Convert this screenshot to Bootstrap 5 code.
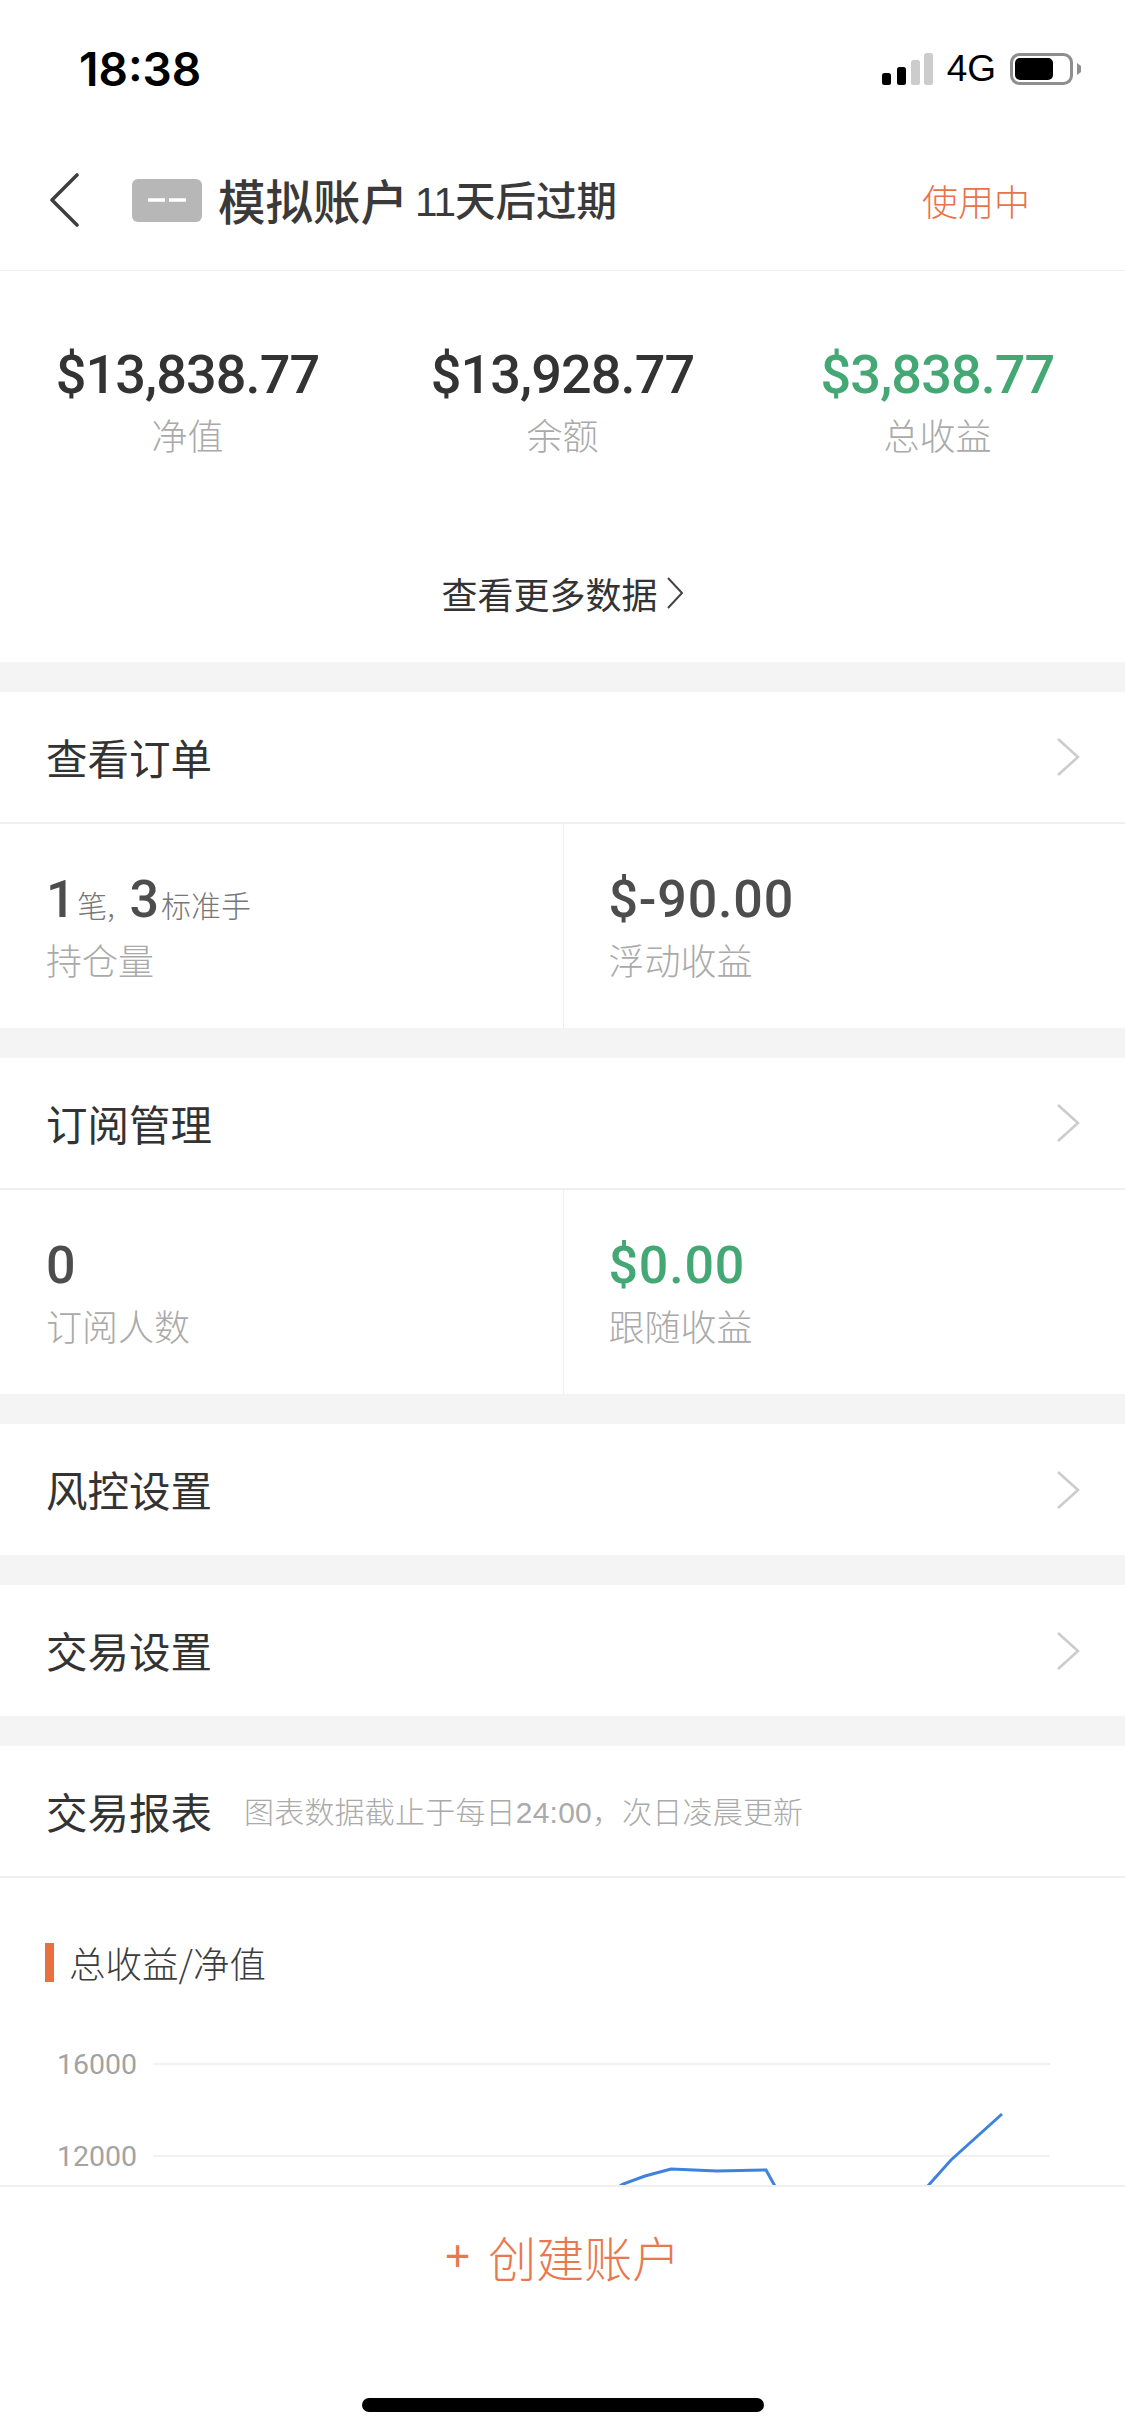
<!DOCTYPE html>
<html lang="zh-CN">
<head>
<meta charset="utf-8">
<title>模拟账户</title>
<link rel="stylesheet" href="https://cdn.jsdelivr.net/npm/bootstrap@5.3.0/dist/css/bootstrap.min.css">
<style>
html,body{height:2436px;overflow:hidden;background:#fff}
body{font-family:"Liberation Sans","Noto Sans CJK SC",sans-serif;color:#333;position:relative;width:1125px}
.cjk{font-family:"Noto Sans CJK SC",sans-serif}
.status-bar{height:130px;padding:47px 43px 0 79px}
.clock{font-family:Inter,"Liberation Sans",sans-serif;font-weight:600;font-size:46px;line-height:44px;color:#000}
.status-icons{margin-top:6px;gap:14px}
.signal-net{font-family:"Liberation Sans",sans-serif;font-size:37px;line-height:32px;color:#000}
.top-nav{height:141px;padding:0 95px 0 49px;border-bottom:1px solid #eee}
.tag-mock{width:70px;height:43px;margin-left:53px;margin-right:16px;background:#b7b7b7;border-radius:6px}
.title-main{font-size:47.5px;font-weight:500;color:#3a3a3a;line-height:60px}
.title-sub{font-size:40.5px;font-weight:500;color:#3a3a3a;line-height:60px;margin-left:7px}
.title-sub b{font-family:"Liberation Sans",sans-serif;font-weight:400;letter-spacing:-1px}
.status-use{font-size:36px;color:#e8734a;font-weight:300;line-height:50px}
.summary{height:391px;padding-top:72px}
.num{font-family:Roboto,"Liberation Sans",sans-serif;font-weight:500}
.sum-val{font-size:54px;line-height:64px;color:#333;letter-spacing:-.9px}
.sum-lab,.cell-lab{font-size:36px;line-height:50px;color:#aaa;font-weight:300}
.sum-lab{margin-top:2px}
.cell-lab{margin-top:3px}
.more-link{margin-top:109px;font-size:36px;line-height:50px;font-weight:400;color:#333;text-decoration:none}
.band{height:30px;background:#f4f4f4}
.row-link{height:132px;padding:0 45px 0 46px;border-bottom:2px solid #efefef;font-size:41.5px;font-weight:400;color:#333;text-decoration:none}
.row-plain{height:131px;border-bottom:0}
.cells{height:204px}
.cell{padding:45px 0 0 46px}
.cell+.cell{padding-left:45px;border-left:1px solid #efefef}
.cell-val{font-size:52px;line-height:62px;color:#4d4d4d;letter-spacing:.8px}
.cell-val small{font-family:"Noto Sans CJK SC",sans-serif;font-size:30px;line-height:1;font-weight:300;color:#777;margin:0 1px;letter-spacing:0}
.txt-up,.cell-val.txt-up{color:#44a875}
.rep-note{margin-left:32px;font-size:30px;font-weight:300;color:#aaa;letter-spacing:.2px}
.rep-note span{font-family:"Liberation Sans",sans-serif}
.chart-title{margin:65px 0 0 45px;border-left:9px solid #e8703f;height:39px;padding-left:15px;font-size:36.5px;line-height:39px;font-weight:300;color:#3c3c3c}
.chart-box{display:block;margin-top:19px}
.axis-txt{font-family:Roboto,"Liberation Sans",sans-serif;font-size:28.5px;fill:#a3a3a3}
.foot-bar{position:absolute;left:0;right:0;top:2185px;bottom:0;background:#fff;border-top:2px solid #efefef}
.foot-btn{height:134px;padding-top:4px;font-size:48px;font-weight:300;color:#e8794f;text-decoration:none}
.foot-btn i{font-style:normal;font-size:44px;margin-right:18px;font-family:"Liberation Sans",sans-serif;line-height:1}
.home-bar{position:absolute;left:362px;top:211px;width:402px;height:14px;background:#000;border-radius:7px}
</style>
</head>
<body>
<div class="cjk">
  <div class="status-bar d-flex justify-content-between align-items-start">
    <div class="clock">18:38</div>
    <div class="status-icons d-flex align-items-center">
      <svg width="51" height="32" viewBox="0 0 51 32" class="d-block" role="img" aria-label="signal">
        <rect x="0" y="20" width="9" height="12" rx="2.5" fill="#000"/>
        <rect x="15" y="14" width="9" height="18" rx="2.5" fill="#000"/>
        <rect x="29" y="7" width="9" height="25" rx="2.5" fill="#ccc"/>
        <rect x="42" y="0" width="9" height="32" rx="2.5" fill="#ccc"/>
      </svg>
      <span class="signal-net">4G</span>
      <svg width="72" height="32" viewBox="0 0 72 32" class="d-block" role="img" aria-label="battery">
        <rect x="1.5" y="1.5" width="60" height="29" rx="8" fill="none" stroke="#8e8e8e" stroke-width="3"/>
        <rect x="5" y="5" width="38" height="22" rx="5" fill="#000"/>
        <path d="M67 10 L71 13 V19 L67 22Z" fill="#8e8e8e"/>
      </svg>
    </div>
  </div>
  <div class="top-nav d-flex align-items-center">
    <svg width="30" height="54" viewBox="0 0 30 54" class="flex-shrink-0" role="img" aria-label="back"><path d="M28 2 L3 27 L28 52" fill="none" stroke="#404040" stroke-width="3.6" stroke-linecap="round" stroke-linejoin="round"/></svg>
    <span class="tag-mock d-flex align-items-center justify-content-center flex-shrink-0">
      <svg width="38" height="6" viewBox="0 0 38 6"><path d="M0 3H17M21 3H38" stroke="#fff" stroke-width="3.4"/></svg>
    </span>
    <span class="title-main">模拟账户</span>
    <span class="title-sub"><b>11</b>天后过期</span>
    <span class="status-use ms-auto">使用中</span>
  </div>

  <div class="summary text-center">
    <div class="row g-0">
      <div class="col-4"><div class="sum-val num">$13,838.77</div><div class="sum-lab">净值</div></div>
      <div class="col-4"><div class="sum-val num">$13,928.77</div><div class="sum-lab">余额</div></div>
      <div class="col-4"><div class="sum-val num txt-up">$3,838.77</div><div class="sum-lab">总收益</div></div>
    </div>
    <a href="#" class="more-link d-inline-flex align-items-center gap-2">查看更多数据
      <svg width="18" height="34" viewBox="0 0 18 34"><path d="M2 2 L16 17 L2 32" fill="none" stroke="#444" stroke-width="2"/></svg>
    </a>
  </div>
  <div class="band"></div>

  <a href="#" class="row-link d-flex align-items-center justify-content-between">查看订单
    <svg width="24" height="40" viewBox="0 0 24 40"><path d="M2 2 L22 20 L2 38" fill="none" stroke="#ccc" stroke-width="2.6"/></svg>
  </a>
  <div class="cells row g-0">
    <div class="col-6 cell"><div class="cell-val num">1<small>笔,</small> 3<small>标准手</small></div><div class="cell-lab">持仓量</div></div>
    <div class="col-6 cell"><div class="cell-val num">$-90.00</div><div class="cell-lab">浮动收益</div></div>
  </div>
  <div class="band"></div>

  <a href="#" class="row-link d-flex align-items-center justify-content-between">订阅管理
    <svg width="24" height="40" viewBox="0 0 24 40"><path d="M2 2 L22 20 L2 38" fill="none" stroke="#ccc" stroke-width="2.6"/></svg>
  </a>
  <div class="cells row g-0">
    <div class="col-6 cell"><div class="cell-val num">0</div><div class="cell-lab">订阅人数</div></div>
    <div class="col-6 cell"><div class="cell-val num txt-up">$0.00</div><div class="cell-lab">跟随收益</div></div>
  </div>
  <div class="band"></div>

  <a href="#" class="row-link row-plain d-flex align-items-center justify-content-between">风控设置
    <svg width="24" height="40" viewBox="0 0 24 40"><path d="M2 2 L22 20 L2 38" fill="none" stroke="#ccc" stroke-width="2.6"/></svg>
  </a>
  <div class="band"></div>

  <a href="#" class="row-link row-plain d-flex align-items-center justify-content-between">交易设置
    <svg width="24" height="40" viewBox="0 0 24 40"><path d="M2 2 L22 20 L2 38" fill="none" stroke="#ccc" stroke-width="2.6"/></svg>
  </a>
  <div class="band"></div>

  <div class="row-link d-flex align-items-center">交易报表<span class="rep-note">图表数据截止于每日<span>24:00</span>，次日凌晨更新</span></div>

  <div class="chart-title">总收益/净值</div>
  <svg class="chart-box" width="1125" height="300" viewBox="0 2003 1125 300" role="img" aria-label="chart">
    <path d="M153 2066H1050M153 2158H1050" stroke="#f1f1f1" stroke-width="2" fill="none"/>
    <text x="57" y="2076" class="axis-txt">16000</text>
    <text x="57" y="2168" class="axis-txt">12000</text>
    <path d="M600 2200 L623 2186 L645 2178 L671 2171 L717 2173 L766 2172 L776 2190 M918 2199 L951 2162 L1002 2116" fill="none" stroke="#3f82de" stroke-width="3"/>
  </svg>
</div>

<div class="foot-bar cjk">
  <a href="#" class="foot-btn d-flex align-items-center justify-content-center"><i>+</i>创建账户</a>
  <div class="home-bar"></div>
</div>
<script src="https://cdn.jsdelivr.net/npm/bootstrap@5.3.0/dist/js/bootstrap.bundle.min.js"></script>
</body>
</html>
